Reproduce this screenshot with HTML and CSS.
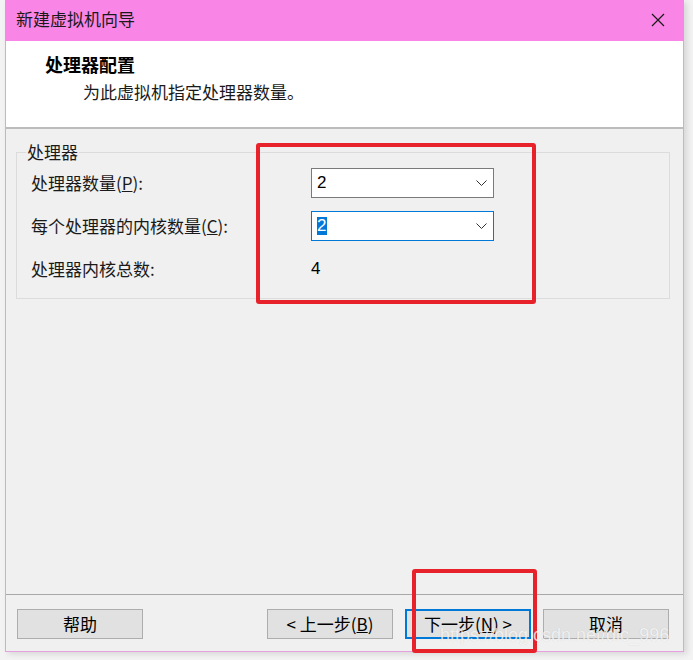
FILE: index.html
```html
<!DOCTYPE html>
<html lang="zh-CN">
<head>
    <meta charset="UTF-8">
    <meta name="viewport" content="width=device-width, initial-scale=1.0">
    <title>新建虚拟机向导</title>
    <link rel="stylesheet" href="styles.css">
</head>
<body>

    <div class="window">
        <!-- Titelbalk -->
        <div class="titlebar">
            <span class="title">新建虚拟机向导</span>
            <svg class="close" width="14" height="14" viewBox="0 0 14 14">
                <path d="M1 1 L13 13 M13 1 L1 13" stroke="#1a1a1a" stroke-width="1.2" fill="none"/>
            </svg>
        </div>

        <!-- Kop van de wizard -->
        <div class="header">
            <div class="header-title">处理器配置</div>
            <div class="header-sub">为此虚拟机指定处理器数量。</div>
        </div>

        <!-- Inhoud -->
        <div class="content">
            <fieldset class="group">
                <legend>处理器</legend>
                <div class="grid">
                    <div class="label">处理器数量(<u>P</u>):</div>
                    <div class="combo">
                        <span class="value">2</span>
                        <svg class="chevron" width="11" height="6" viewBox="0 0 11 6">
                            <path d="M0.5 0.5 L5.5 5.5 L10.5 0.5" stroke="#333" stroke-width="1" fill="none"/>
                        </svg>
                    </div>

                    <div class="label">每个处理器的内核数量(<u>C</u>):</div>
                    <div class="combo focused">
                        <span class="value selected">2</span>
                        <svg class="chevron" width="11" height="6" viewBox="0 0 11 6">
                            <path d="M0.5 0.5 L5.5 5.5 L10.5 0.5" stroke="#333" stroke-width="1" fill="none"/>
                        </svg>
                    </div>

                    <div class="label">处理器内核总数:</div>
                    <div class="total">4</div>
                </div>
            </fieldset>
        </div>

        <!-- Knoppenbalk -->
        <div class="footer">
            <button class="btn">帮助</button>
            <div class="spacer"></div>
            <button class="btn">&lt; 上一步(<u>B</u>)</button>
            <button class="btn primary">下一步(<u>N</u>) &gt;</button>
            <button class="btn">取消</button>
        </div>
    </div>

    <!-- Rode markeringen -->
    <div class="mark mark-settings"></div>
    <div class="mark mark-next"></div>

    <div class="watermark">https://blog.csdn.net/dlc_996</div>

</body>
</html>
```

FILE: styles.css
```css
/* Algemene bodystijl */
body {
    margin: 0;
    padding: 0 0 0 5px;
    background-color: #f3f3f3;
    font-family: "Noto Sans CJK SC", "Microsoft YaHei", sans-serif;
    font-size: 17px;
    color: #1a1a1a;
    height: 660px;
    overflow: hidden;
}

/* Venster */
.window {
    box-sizing: border-box;
    width: 679px;
    height: 652px;
    border: 1px solid #e69fdf;
    border-top: none;
    background-color: #f0f0f0;
    display: flex;
    flex-direction: column;
    box-shadow: 3px 2px 6px rgba(0, 0, 0, 0.12);
}

.titlebar {
    height: 41px;
    flex-shrink: 0;
    margin: 0 -1px;
    background-color: #f986e6;
    display: flex;
    align-items: center;
    padding: 0 19px 0 11px;
}

.title {
    flex-grow: 1;
    line-height: 20px;
    margin-top: -3px;
}

.close {
    margin-top: -2px;
}

/* Kop */
.header {
    height: 74px;
    flex-shrink: 0;
    background-color: #fff;
    border-bottom: 2px solid #bcbcbc;
    padding: 12px 0 0 39px;
}

.header-title {
    font-size: 18px;
    font-weight: bold;
    line-height: 22px;
    color: #000;
}

.header-sub {
    margin: 6px 0 0 38px;
    line-height: 22px;
}

/* Inhoud */
.content {
    flex-grow: 1;
    padding: 13px 13px 0 10px;
}

.group {
    margin: 0;
    border: 1px solid #dcdcdc;
    padding: 6px 14px 14px 14px;
}

.group legend {
    margin-left: -5px;
    padding: 0 1px;
    line-height: 20px;
}

.grid {
    display: grid;
    grid-template-columns: 280px 183px;
    grid-auto-rows: 30px;
    row-gap: 13px;
    align-items: center;
}

.label {
    line-height: 20px;
}

.combo {
    box-sizing: border-box;
    height: 30px;
    background-color: #fff;
    border: 1px solid #7a7a7a;
    display: flex;
    align-items: center;
    justify-content: space-between;
    padding: 0 6px 0 5px;
}

.combo.focused {
    border-color: #0078d7;
}

.value {
    font-family: "Liberation Sans", sans-serif;
    line-height: 18px;
    color: #000;
}

.value.selected {
    background-color: #0078d7;
    color: #fff;
    padding: 0 1px 0 0;
}

.total {
    font-family: "Liberation Sans", sans-serif;
    color: #000;
}

/* Knoppenbalk */
.footer {
    flex-shrink: 0;
    border-top: 1px solid #a8a8a8;
    display: flex;
    padding: 14px 14px 12px 11px;
}

.spacer {
    flex-grow: 1;
}

.btn {
    box-sizing: border-box;
    width: 126px;
    height: 30px;
    margin: 0 0 0 12px;
    padding: 0;
    background-color: #e1e1e1;
    border: 1px solid #adadad;
    font-family: inherit;
    font-size: 17px;
    line-height: 20px;
    color: #000;
}

.btn:first-child {
    margin-left: 0;
}

.btn.primary {
    border: 2px solid #0078d7;
}

/* Rode markeringen */
.mark {
    position: absolute;
    box-sizing: border-box;
    border: 4px solid #e8222b;
    border-radius: 3px;
}

.mark-settings {
    left: 256px;
    top: 143px;
    width: 280px;
    height: 161px;
}

.mark-next {
    left: 412px;
    top: 569px;
    width: 125px;
    height: 84px;
}

.watermark {
    position: absolute;
    left: 440px;
    top: 624px;
    font-family: "Liberation Sans", sans-serif;
    font-size: 18px;
    line-height: 22px;
    color: rgba(255, 255, 255, 0.75);
    text-shadow: 0 0 1px rgba(0, 0, 0, 0.15);
}
```
